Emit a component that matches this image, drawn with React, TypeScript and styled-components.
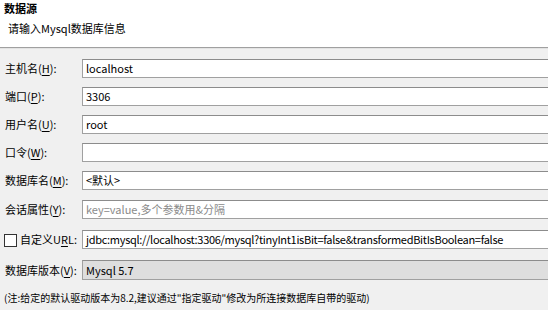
import React from 'react';
import styled, {createGlobalStyle} from "styled-components";

const GlobalStyle = createGlobalStyle`
  html, body {
    margin: 0;
    padding: 0;
    background: #f0f0f0;
    overflow: hidden;
  }
  body {
    font-family: "Noto Sans CJK SC", "Noto Sans", sans-serif;
    font-size: 11px;
    color: #000;
  }
`

const Page = styled.div`
  width: 548px;
  height: 310px;
  overflow: hidden;
  background: #f0f0f0;
`

const Header = styled.header`
  height: 48px;
  background: #fff;
  border-bottom: 1px solid #a0a0a0;
  box-shadow: 0 1px 0 #e3e3e3;
  padding: 0 4px;
  box-sizing: border-box;
`

const Title = styled.h1`
  margin: 0;
  font-size: 11px;
  line-height: 17px;
  font-weight: bold;
`

const Subtitle = styled.p`
  margin: 3px 0 0 4px;
  font-size: 11px;
  line-height: 17px;
`

const Form = styled.div`
  display: flex;
  flex-direction: column;
  gap: 9px;
  padding: 11px 0 0 0;
`

const Row = styled.div<{ $offset?: number }>`
  display: grid;
  grid-template-columns: 82px 480px;
  align-items: center;
  margin-top: ${p => p.$offset ?? 0}px;
`

const Label = styled.label`
  padding-left: 5px;
  white-space: nowrap;
  line-height: 17px;

  & u {
    text-decoration: underline;
    text-underline-offset: 2px;
  }
`

const Field = styled.div<{ $muted?: boolean; $disabled?: boolean; $tall?: boolean; $tight?: boolean }>`
  height: ${p => p.$tall ? 20 : 19}px;
  box-sizing: border-box;
  border: 1px solid #a0a0a0;
  border-top-color: #8c8c8c;
  border-right: none;
  background: ${p => p.$disabled ? '#dedede' : '#fff'};
  color: ${p => p.$muted ? '#8a8a8a' : '#000'};
  padding: 0 3px;
  display: flex;
  align-items: center;
  white-space: nowrap;
  overflow: hidden;
  line-height: 17px;
  letter-spacing: ${p => p.$tight ? '-0.3px' : '0'};
`

const Check = styled.span`
  display: inline-block;
  width: 13px;
  height: 13px;
  box-sizing: border-box;
  border: 1px solid #333;
  background: #fff;
  vertical-align: -3px;
  margin: 0 3px 0 -1px;
`

const Note = styled.p`
  margin: 9px 0 0 4px;
  font-size: 10px;
  line-height: 17px;
  white-space: nowrap;
`

const App: React.FC = () => {
    const rows = [
        {name: '主机名', key: 'H', value: 'localhost'},
        {name: '端口', key: 'P', value: '3306'},
        {name: '用户名', key: 'U', value: 'root'},
        {name: '口令', key: 'W', value: ''},
        {name: '数据库名', key: 'M', value: '<默认>'},
    ]

    return (
        <Page>
            <GlobalStyle/>
            <Header>
                <Title>数据源</Title>
                <Subtitle>请输入Mysql数据库信息</Subtitle>
            </Header>
            <Form>
                {
                    rows.map(item => (
                        <Row key={item.key}>
                            <Label>{item.name}(<u>{item.key}</u>):</Label>
                            <Field>{item.value}</Field>
                        </Row>
                    ))
                }
                <Row $offset={1}>
                    <Label>会话属性(<u>Y</u>):</Label>
                    <Field $muted>key=value,多个参数用&amp;分隔</Field>
                </Row>
                <Row $offset={2}>
                    <Label><Check/>自定义U<u>R</u>L:</Label>
                    <Field $tight>jdbc:mysql://localhost:3306/mysql?tinyInt1isBit=false&amp;transformedBitIsBoolean=false</Field>
                </Row>
                <Row $offset={2}>
                    <Label>数据库版本(<u>V</u>):</Label>
                    <Field $disabled $tall>Mysql 5.7</Field>
                </Row>
            </Form>
            <Note>(注:给定的默认驱动版本为8.2,建议通过"指定驱动"修改为所连接数据库自带的驱动)</Note>
        </Page>
    )
}

export default App
